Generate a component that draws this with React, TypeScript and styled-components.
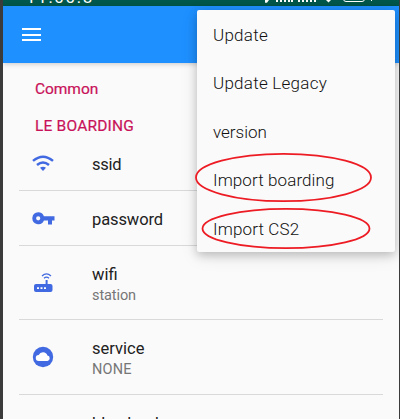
import React from "react";
import styled, { createGlobalStyle } from "styled-components";

const Global = createGlobalStyle`
  * { box-sizing: border-box; }
  body { margin: 0; overflow: hidden; font-family: Roboto, "Noto Sans", sans-serif; }
`;

const Screen = styled.div`
  position: relative;
  width: 400px;
  height: 419px;
  overflow: hidden;
  background: #fafafa;
  border-left: 3px solid #3b3b3b;
  border-right: 1px solid #3b3b3b;
  display: flex;
  flex-direction: column;
`;

const StatusBar = styled.div`
  height: 6px;
  flex: none;
  overflow: hidden;
  background: #00574b;
  color: #fff;
  display: flex;
  justify-content: space-between;
  padding: 0 27px 0 23px;
`;

const Clock = styled.span`
  font-size: 17px;
  line-height: 20px;
  margin-top: -13px;
  letter-spacing: 1.7px;
`;

const AppBar = styled.header`
  height: 57px;
  flex: none;
  background: #1e90ff;
  padding: 22px 19px;
  box-shadow: 0 1px 5px rgba(0, 0, 0, 0.2);
`;

const MenuIcon = styled.div`
  width: 19px;
  height: 13px;
  display: flex;
  flex-direction: column;
  justify-content: space-between;
`;

const Bar = styled.i`
  height: 2px;
  background: #fff;
`;

const Heading = styled.h2<{ $spacing: number; $height: number; $top: number }>`
  margin: 0;
  flex: none;
  height: ${(p) => p.$height}px;
  padding: ${(p) => p.$top}px 0 0 32px;
  font-size: 15.5px;
  line-height: 20px;
  font-weight: 400;
  color: #c81259;
  -webkit-text-stroke: 0.2px #c81259;
  letter-spacing: ${(p) => p.$spacing}px;
`;

const Row = styled.section<{ $height: number }>`
  flex: none;
  height: ${(p) => p.$height}px;
  margin: 0 16px 0 16px;
  border-bottom: 1px solid #d9d9d9;
  display: grid;
  grid-template-columns: 73px 1fr;
  align-items: center;
`;

const IconSlot = styled.span`
  padding-left: 13px;
  display: flex;
`;

const TextBlock = styled.div`
  padding-top: 3px;
`;

const Label = styled.div<{ $spacing?: number }>`
  font-size: 16.5px;
  line-height: 22px;
  color: #212121;
  letter-spacing: ${(p) => p.$spacing ?? 0}px;
`;

const Value = styled.div<{ $spacing?: number }>`
  font-size: 14.5px;
  line-height: 19px;
  color: #767676;
  letter-spacing: ${(p) => p.$spacing ?? 0}px;
`;

const Popup = styled.nav`
  position: absolute;
  left: 194px;
  top: 10px;
  width: 198px;
  height: 242px;
  border-radius: 2px;
  background: #fafafa;
  box-shadow: 0 3px 10px rgba(0, 0, 0, 0.2), 0 4px 18px rgba(0, 0, 0, 0.1);
  display: flex;
  flex-direction: column;
`;

const Item = styled.div<{ $spacing: number }>`
  height: 48.4px;
  padding: 1px 0 0 16px;
  font-size: 17px;
  font-weight: 300;
  line-height: 49px;
  white-space: nowrap;
  color: #111;
  letter-spacing: ${(p) => p.$spacing}px;
`;

const Marks = styled.svg`
  position: absolute;
  left: -3px;
  top: 0;
  pointer-events: none;
`;

const blue = "#4169e1";

const StatusIcons = () => (
  <svg width="108" height="6" viewBox="265 0 108 6" fill="#fff">
    <path d="M266 0h4l-2 2.700h-2z" />
    <path d="M277 0h2v2h-2zM281 0h2v2h-2zM285 0h2v2h-2zM289 0h2v2h-2zM292 0h2v2h-2zM299 0h2v2h-2zM303 0h2v2h-2zM307 0h2v2h-2zM311 0h2v2h-2zM315 0h2v2h-2z" />
    <path d="M327 0h5l-2.500 2.600z" />
    <path d="M344.500-1q0 2.500 2.500 2.500h16q2.500 0 2.500-2.500" fill="none" stroke="#fff" />
    <path d="M372 0h1v1h-1z" />
  </svg>
);

const WifiIcon = () => (
  <svg width="22" height="16" viewBox="0 0 22 16" fill="none" stroke={blue} strokeWidth="2.500">
    <path d="M1 5.900Q11-2.500 21 5.900" />
    <path d="M5 10Q11 5 17 10" />
    <path d="M8 12.700Q11 10.800 14 12.700L11 16z" fill={blue} stroke="none" />
  </svg>
);

const KeyIcon = () => (
  <svg width="23" height="13" viewBox="0 0 23 13" fill={blue}>
    <path fillRule="evenodd" d="M6.200.200a6 6 0 1 0 5.700 8.300H16V12.500h4V8.500h2.500V4.300H11.900A6 6 0 0 0 6.200.200zM6.200 4.200a2.100 2.100 0 1 1 0 4.200a2.100 2.100 0 0 1 0-4.200z" />
  </svg>
);

const RouterIcon = () => (
  <svg width="22" height="20" viewBox="0 0 22 20" fill="none">
    <path d="M10 3Q14.500-1.200 19 3M12 5.200Q14.500 3 17 5.200" stroke={blue} strokeWidth="1.200" />
    <path d="M13.600 7h2v5h-2z" fill={blue} />
    <rect x="2" y="11" width="18.500" height="8" rx="2" fill={blue} />
    <path d="M5 14.200h2v1.800H5zM8.500 14.200h2v1.800h-2zM12 14.200h2v1.800h-2z" fill="#fff" />
  </svg>
);

const CloudIcon = () => (
  <svg width="22" height="22" viewBox="0 0 22 22">
    <circle cx="11" cy="11" r="10.200" fill={blue} />
    <path d="M6.800 15a3 3 0 0 1-.1-6A4.700 4.700 0 0 1 15.400 9.500a2.800 2.800 0 0 1 .100 5.500z" fill="#fff" />
  </svg>
);

export default function App() {
  return (
    <Screen>
      <Global />
      <StatusBar>
        <Clock>11:00:8</Clock>
        <StatusIcons />
      </StatusBar>
      <AppBar>
        <MenuIcon><Bar /><Bar /><Bar /></MenuIcon>
      </AppBar>
      <Heading $height={45} $top={16} $spacing={-0.05}>Common</Heading>
      <Heading $height={28} $top={8} $spacing={0.2}>LE BOARDING</Heading>
      <Row $height={55}>
        <IconSlot><WifiIcon /></IconSlot>
        <TextBlock><Label $spacing={-0.3}>ssid</Label></TextBlock>
      </Row>
      <Row $height={55}>
        <IconSlot><KeyIcon /></IconSlot>
        <TextBlock><Label $spacing={-0.1}>password</Label></TextBlock>
      </Row>
      <Row $height={74}>
        <IconSlot><RouterIcon /></IconSlot>
        <TextBlock><Label>wifi</Label><Value $spacing={-0.1}>station</Value></TextBlock>
      </Row>
      <Row $height={75}>
        <IconSlot><CloudIcon /></IconSlot>
        <TextBlock><Label>service</Label><Value $spacing={0.2}>NONE</Value></TextBlock>
      </Row>
      <Row $height={75}>
        <span />
        <TextBlock><Label>blue load</Label><Value>NONE</Value></TextBlock>
      </Row>
      <Popup>
        <Item $spacing={0.25}>Update</Item>
        <Item $spacing={0.25}>Update Legacy</Item>
        <Item $spacing={0}>version</Item>
        <Item $spacing={0.1}>Import boarding</Item>
        <Item $spacing={0.15}>Import CS2</Item>
      </Popup>
      <Marks width="400" height="419" fill="none" stroke="#ed1c24" strokeWidth="1.800">
        <ellipse cx="283.500" cy="177.500" rx="87.500" ry="23.700" />
        <ellipse cx="286" cy="228.500" rx="83.500" ry="19.700" />
      </Marks>
    </Screen>
  );
}
